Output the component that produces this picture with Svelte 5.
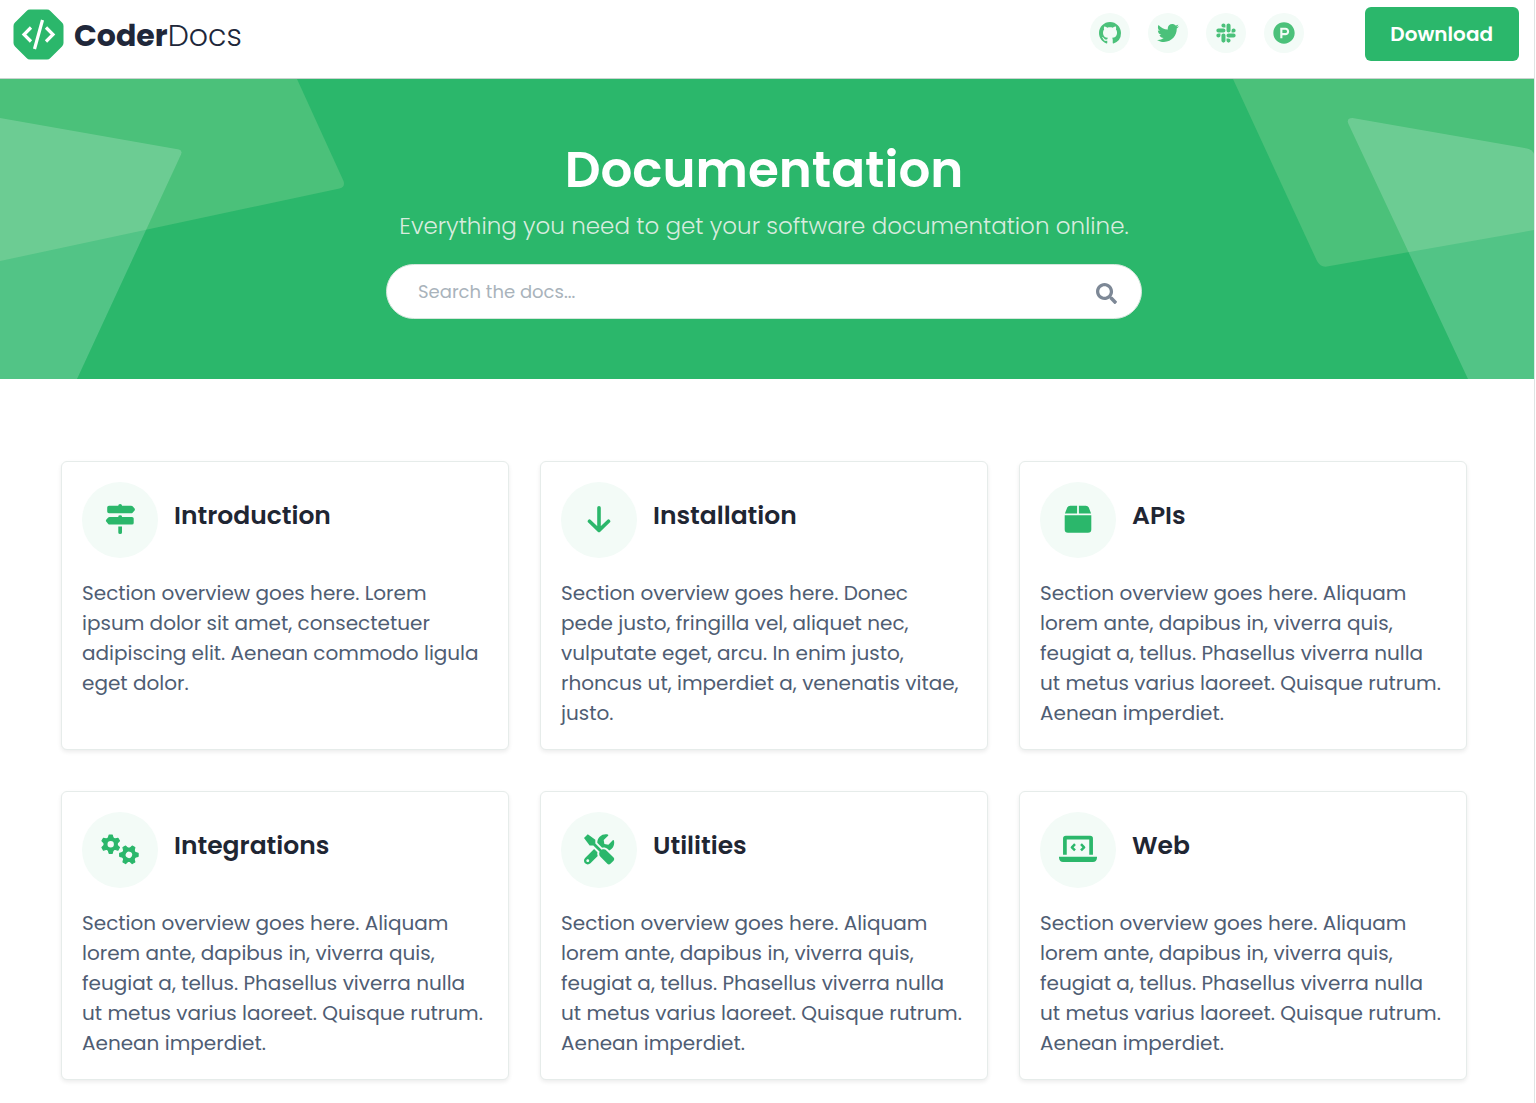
<script>
  const socials = [
    {
      label: 'GitHub',
      box: '0 0 16 16',
      d: 'M8 0C3.58 0 0 3.58 0 8c0 3.54 2.29 6.53 5.47 7.59.4.07.55-.17.55-.38 0-.19-.01-.82-.01-1.49-2.01.37-2.53-.49-2.69-.94-.09-.23-.48-.94-.82-1.13-.28-.15-.68-.52-.01-.53.63-.01 1.08.58 1.23.82.72 1.21 1.87.87 2.33.66.07-.52.28-.87.51-1.07-1.78-.2-3.64-.89-3.64-3.95 0-.87.31-1.59.82-2.15-.08-.2-.36-1.02.08-2.12 0 0 .67-.21 2.2.82.64-.18 1.32-.27 2-.27s1.36.09 2 .27c1.53-1.04 2.2-.82 2.2-.82.44 1.1.16 1.92.08 2.12.51.56.82 1.27.82 2.15 0 3.07-1.87 3.75-3.65 3.95.29.25.54.73.54 1.48 0 1.07-.01 1.93-.01 2.2 0 .21.15.46.55.38A8.01 8.01 0 0 0 16 8c0-4.42-3.58-8-8-8z'
    },
    {
      label: 'Twitter',
      box: '0 0 512 512',
      d: 'M459.37 151.716c.325 4.548.325 9.097.325 13.645 0 138.72-105.583 298.558-298.558 298.558-59.452 0-114.68-17.219-161.137-47.106 8.447.974 16.568 1.299 25.34 1.299 49.055 0 94.213-16.568 130.274-44.832-46.132-.975-84.792-31.188-98.112-72.772 6.498.974 12.995 1.624 19.818 1.624 9.421 0 18.843-1.3 27.614-3.573-48.081-9.747-84.143-51.98-84.143-102.985v-1.299c13.969 7.797 30.214 12.67 47.431 13.319-28.264-18.843-46.781-51.005-46.781-87.391 0-19.492 5.197-37.36 14.294-52.954 51.655 63.675 129.3 105.258 216.365 109.807-1.624-7.797-2.599-15.918-2.599-24.04 0-57.828 46.782-104.934 104.934-104.934 30.213 0 57.502 12.67 76.67 33.137 23.715-4.548 46.456-13.32 66.599-25.34-7.798 24.366-24.366 44.833-46.132 57.827 21.117-2.273 41.584-8.122 60.426-16.243-14.292 20.791-32.161 39.308-52.628 54.253z'
    },
    {
      label: 'Slack',
      box: '-32 0 512 512',
      d: 'M94.12 315.1c0 25.9-21.16 47.06-47.06 47.06S0 341 0 315.1c0-25.9 21.16-47.06 47.06-47.06h47.06v47.06zm23.72 0c0-25.9 21.16-47.06 47.06-47.06s47.06 21.16 47.06 47.06v117.84c0 25.9-21.16 47.06-47.06 47.06s-47.06-21.16-47.06-47.06V315.1zm47.06-188.98c-25.9 0-47.06-21.16-47.06-47.06S139 32 164.9 32s47.06 21.16 47.06 47.06v47.06H164.9zm0 23.72c25.9 0 47.06 21.16 47.06 47.06s-21.16 47.06-47.06 47.06H47.06C21.16 243.96 0 222.8 0 196.9s21.16-47.06 47.06-47.06H164.9zm188.98 47.06c0-25.9 21.16-47.06 47.06-47.06 25.9 0 47.06 21.16 47.06 47.06s-21.16 47.06-47.06 47.06h-47.06V196.9zm-23.72 0c0 25.9-21.16 47.06-47.06 47.06-25.9 0-47.06-21.16-47.06-47.06V79.06c0-25.9 21.16-47.06 47.06-47.06 25.9 0 47.06 21.16 47.06 47.06V196.9zM283.1 385.88c25.9 0 47.06 21.16 47.06 47.06 0 25.9-21.16 47.06-47.06 47.06-25.9 0-47.06-21.16-47.06-47.06v-47.06h47.06zm0-22.72c-25.9 0-47.06-21.16-47.06-47.06 0-25.9 21.16-47.06 47.06-47.06h117.84c25.9 0 47.06 21.16 47.06 47.06 0 25.9-21.16 47.06-47.06 47.06H283.1z'
    },
    {
      label: 'Product Hunt',
      box: '0 0 512 512',
      d: 'M326.3 218.8c0 20.5-16.7 37.2-37.2 37.2h-70.3v-74.4h70.3c20.5 0 37.2 16.7 37.2 37.2zM504 256c0 137-111 248-248 248S8 393 8 256 119 8 256 8s248 111 248 248zm-128.1-37.2c0-47.9-38.9-86.8-86.8-86.8H169.2v248h49.6v-74.4h70.3c47.9 0 86.8-38.9 86.8-86.8z'
    }
  ];

  const aliquam =
    'Section overview goes here. Aliquam lorem ante, dapibus in, viverra quis, feugiat a, tellus. Phasellus viverra nulla ut metus varius laoreet. Quisque rutrum. Aenean imperdiet.';

  const cards = [
    {
      title: 'Introduction',
      icon: 'signs',
      text: 'Section overview goes here. Lorem ipsum dolor sit amet, consectetuer adipiscing elit. Aenean commodo ligula eget dolor.'
    },
    {
      title: 'Installation',
      icon: 'arrow',
      text: 'Section overview goes here. Donec pede justo, fringilla vel, aliquet nec, vulputate eget, arcu. In enim justo, rhoncus ut, imperdiet a, venenatis vitae, justo.'
    },
    { title: 'APIs', icon: 'box', text: aliquam },
    { title: 'Integrations', icon: 'gears', text: aliquam },
    { title: 'Utilities', icon: 'tools', text: aliquam },
    { title: 'Web', icon: 'laptop', text: aliquam }
  ];

  const teeth = [0, 60, 120, 180, 240, 300];
</script>

{#snippet gear(x, y, turn)}
  <g transform="translate({x} {y}) rotate({turn})">
    <circle r="5.200" fill="none" stroke="currentColor" stroke-width="4" />
    {#each teeth as angle}
      <path
        d="M-2.400 -6L-1.500 -9.200H1.500L2.400 -6z"
        fill="currentColor"
        stroke="currentColor"
        stroke-width="1.200"
        stroke-linejoin="round"
        transform="rotate({angle})"
      />
    {/each}
  </g>
{/snippet}

<div class="page">
  <header>
    <a class="brand" href="#home">
      <svg class="mark" viewBox="0 0 51 51" aria-hidden="true">
        <path
          d="M17 0.5H34q2 0 3.400 1.400L49 13.600q1.500 1.500 1.500 3.400V34q0 2-1.500 3.400L37.400 49q-1.400 1.500-3.400 1.500H17q-2 0-3.400-1.500L2 37.400Q.5 36 .5 34V17q0-2 1.500-3.400L13.600 1.900Q15 .5 17 .5z"
          fill="#2bb76b"
        />
        <path
          d="M18 18.500L11 25.500L18 32.500M33 18.500L40 25.500L33 32.500M29.500 11L21.500 40"
          fill="none"
          stroke="#fff"
          stroke-width="3.200"
        />
      </svg>
      <span class="name"><b>Coder</b>Docs</span>
    </a>
    <nav aria-label="Social links">
      {#each socials as s}
        <a class="social" href="#social" aria-label={s.label}>
          <svg viewBox={s.box} aria-hidden="true"><path d={s.d} fill="currentColor" /></svg>
        </a>
      {/each}
    </nav>
    <a class="download" href="#download">Download</a>
  </header>

  <section class="hero">
    <svg class="shape left" viewBox="0 0 345 300" aria-hidden="true">
      <path d="M0 0H297L343.500 102q2 6-4 7.500L0 182z" fill="#4bc17a" />
      <path d="M0 39L179 70.500q3.500 1 2 5L77 300H0z" fill="#fff" fill-opacity=".19" />
    </svg>
    <svg class="shape right" viewBox="0 0 301 300" aria-hidden="true">
      <path d="M0 0L84 182q3.500 6.500 10 5.500L301 151V0z" fill="#4bc17a" />
      <path d="M235 300L115.500 45q-2.500-6 4-6L294 69.500q5 1 7 5V300z" fill="#fff" fill-opacity=".19" />
    </svg>
    <h1>Documentation</h1>
    <p>Everything you need to get your software documentation online.</p>
    <form class="search" onsubmit={(e) => e.preventDefault()}>
      <input type="text" placeholder="Search the docs..." aria-label="Search the docs" />
      <button type="submit" aria-label="Search">
        <svg viewBox="0 0 512 512" aria-hidden="true">
          <path
            d="M505 442.700L405.300 343c-4.500-4.500-10.600-7-17-7H372c27.600-35.300 44-79.700 44-128C416 93.100 322.900 0 208 0S0 93.100 0 208s93.100 208 208 208c48.300 0 92.700-16.400 128-44v16.300c0 6.400 2.500 12.500 7 17l99.700 99.700c9.400 9.400 24.600 9.400 33.900 0l28.300-28.300c9.400-9.400 9.400-24.600.1-34zM208 336c-70.700 0-128-57.200-128-128 0-70.700 57.200-128 128-128 70.700 0 128 57.200 128 128 0 70.700-57.200 128-128 128z"
            fill="currentColor"
          />
        </svg>
      </button>
    </form>
  </section>

  <main>
    {#each cards as card}
      <article>
        <div class="head">
          <span class="disc">
            <svg viewBox="0 0 40 32" aria-hidden="true">
              {#if card.icon === 'signs'}
                <path
                  d="M18.300 1.700V1.500Q18.300 0 20.100 0Q22 0 22 1.500V1.700H31.200Q32 1.700 32.600 2.300L34.600 4.500Q35.200 5.400 34.600 6.400L32.600 8.700Q32 9.300 31.200 9.300H9Q7.200 9.300 7.200 7.600V3.400Q7.200 1.700 9 1.700zM18.300 13V12.600Q18.300 11.200 20.100 11.200Q22 11.200 22 12.600V13H32Q33.700 13 33.700 14.600V18.900Q33.700 20.500 32 20.500H9.600Q8.800 20.500 8.200 19.900L6.200 17.600Q5.600 16.700 6.200 15.800L8.200 13.600Q8.800 13 9.600 13zM18.300 22.600H22V28.400Q22 30 20.100 30Q18.300 30 18.300 28.400z"
                  fill="currentColor"
                />
              {:else if card.icon === 'arrow'}
                <path
                  d="M20 3.800V26M10.500 17.200L20 26.400L29.500 17.200"
                  fill="none"
                  stroke="currentColor"
                  stroke-width="3.600"
                  stroke-linecap="round"
                  stroke-linejoin="round"
                />
              {:else if card.icon === 'box'}
                <path
                  d="M19.100 1.700V9.600H6.900L9.200 3.600Q10.100 1.700 12.200 1.700zM20.900 1.700H27.800Q29.900 1.700 30.800 3.600L33.100 9.600H20.900zM6.700 11.200H33.300V25.400Q33.300 28.700 30 28.700H10Q6.700 28.700 6.700 25.400z"
                  fill="currentColor"
                />
              {:else if card.icon === 'gears'}
                {@render gear(10.7, 10.2, 0)}
                {@render gear(28.9, 20.8, 30)}
              {:else if card.icon === 'tools'}
                <path
                  transform="translate(5 .2) scale(.0590)"
                  fill="currentColor"
                  d="M501.100 395.700L384 278.600c-23.100-23.100-57.600-27.600-85.400-13.900L192 158.100V96L64 0 0 64l96 128h62.100l106.600 106.600c-13.600 27.800-9.200 62.300 13.900 85.400l117.100 117.100c14.600 14.600 38.200 14.600 52.700 0l52.700-52.700c14.500-14.600 14.500-38.200 0-52.700zM331.700 225c28.300 0 54.900 11 74.900 31l19.400 19.400c15.800-6.900 30.800-16.500 43.800-29.500 37.100-37.100 49.700-89.300 37.900-136.700-2.200-9-13.500-12.100-20.100-5.500l-74.400 74.400-67.900-11.300L334 98.900l74.400-74.400c6.600-6.600 3.400-17.900-5.700-20.200-47.400-11.700-99.600.9-136.600 37.900-28.500 28.500-41.900 66.100-41.200 103.600l82.100 82.100c8.100-1.900 16.500-2.900 24.700-2.900zm-103.900 82l-56.700-56.700L18.700 402.800c-25 25-25 65.500 0 90.500s65.500 25 90.500 0l123.600-123.600c-7.600-19.900-9.900-41.600-5-62.700zM64 472c-13.200 0-24-10.800-24-24 0-13.300 10.700-24 24-24s24 10.700 24 24c0 13.200-10.700 24-24 24z"
                />
              {:else}
                <path
                  d="M6.900 20.700V4.600Q6.900 3.600 7.900 3.600H32.100Q33.100 3.600 33.100 4.600V20.700"
                  fill="none"
                  stroke="currentColor"
                  stroke-width="3.700"
                />
                <path d="M1 22.700H39V23.700Q38.500 28.100 35 28.100H5Q1.500 28.100 1 23.700z" fill="currentColor" />
                <path
                  d="M17 10.200L13.900 13.300L17 16.400M23 10.200L26.100 13.300L23 16.400"
                  fill="none"
                  stroke="currentColor"
                  stroke-width="2.500"
                  stroke-linejoin="round"
                />
              {/if}
            </svg>
          </span>
          <h2>{card.title}</h2>
        </div>
        <p>{card.text}</p>
      </article>
    {/each}
  </main>
</div>

<style>
  :global(body) {
    margin: 0;
    background: #fff;
  }
  .page {
    box-sizing: border-box;
    min-height: 100vh;
    margin-right: 1px;
    border-right: 1px solid #dfe5e4;
    padding-bottom: 22px;
    font-family: Poppins, Inter, 'Open Sans', sans-serif;
    color: #4f5d73;
  }
  header {
    display: flex;
    align-items: center;
    padding: 7px 15px 17px 13px;
    border-bottom: 1px solid #c9d3cf;
  }
  .brand {
    display: flex;
    align-items: center;
    gap: 10px;
    color: #20273a;
    text-decoration: none;
  }
  .mark {
    width: 51px;
    height: 51px;
  }
  .name {
    padding-top: 3px;
    font-size: 30px;
    font-weight: 300;
    line-height: 36px;
  }
  .name b {
    font-weight: 700;
  }
  nav {
    display: flex;
    gap: 18px;
    margin: 0 61px 2px auto;
  }
  .social {
    display: flex;
    align-items: center;
    justify-content: center;
    width: 40px;
    height: 40px;
    border-radius: 50%;
    background: #f3fbf7;
    color: #4bc17a;
  }
  .social svg {
    width: 22px;
    height: 22px;
  }
  .download {
    padding: 12px 26px 12px 25px;
    border-radius: 6px;
    background: #2bb76b;
    color: #fff;
    font-size: 20px;
    font-weight: 600;
    line-height: 30px;
    text-decoration: none;
  }
  .hero {
    position: relative;
    overflow: hidden;
    padding: 61px 6px 60px 0;
    background: #2bb76b;
    text-align: center;
  }
  .shape {
    position: absolute;
    top: 0;
    height: 100%;
  }
  .left {
    left: 0;
  }
  .right {
    right: 0;
  }
  h1 {
    margin: 0;
    color: #fff;
    font-size: 50px;
    font-weight: 600;
    line-height: 60px;
  }
  .hero p {
    margin: 9px 0 20px;
    color: #d8ecdf;
    font-size: 23px;
    font-weight: 300;
    line-height: 35px;
  }
  .search {
    display: flex;
    align-items: center;
    box-sizing: border-box;
    max-width: 756px;
    height: 55px;
    margin: 0 auto;
    padding: 0 24px 0 31px;
    border: 1px solid #d5e6dc;
    border-radius: 28px;
    background: #fff;
  }
  input {
    flex: 1;
    min-width: 0;
    padding: 0;
    border: 0;
    outline: 0;
    background: none;
    color: #4f5d73;
    font: inherit;
    font-size: 18px;
    line-height: 28px;
  }
  input::placeholder {
    color: #a9b3bb;
    opacity: 1;
  }
  button {
    display: flex;
    padding: 4px 0 0;
    border: 0;
    background: none;
    color: #7d8896;
  }
  button svg {
    width: 21px;
    height: 21px;
  }
  main {
    display: grid;
    grid-template-columns: repeat(3, minmax(0, 1fr));
    gap: 41px 31px;
    padding: 82px 67px 0 61px;
  }
  article {
    padding: 20px 23px 21px 20px;
    border: 1px solid #e6ecea;
    border-radius: 6px;
    background: #fff;
    box-shadow: 0 2px 4px rgba(0, 0, 0, 0.08);
  }
  .head {
    display: flex;
    align-items: center;
    gap: 16px;
  }
  .disc {
    display: flex;
    align-items: center;
    justify-content: center;
    flex: none;
    width: 76px;
    height: 76px;
    border-radius: 50%;
    background: #f3fbf7;
    color: #2bb76b;
  }
  .disc svg {
    width: 40px;
    height: 32px;
  }
  h2 {
    margin: 0 0 8px;
    color: #1f2633;
    font-size: 25px;
    font-weight: 600;
    line-height: 32px;
  }
  article p {
    margin: 20px 0 0;
    font-size: 20px;
    line-height: 30px;
  }
</style>
